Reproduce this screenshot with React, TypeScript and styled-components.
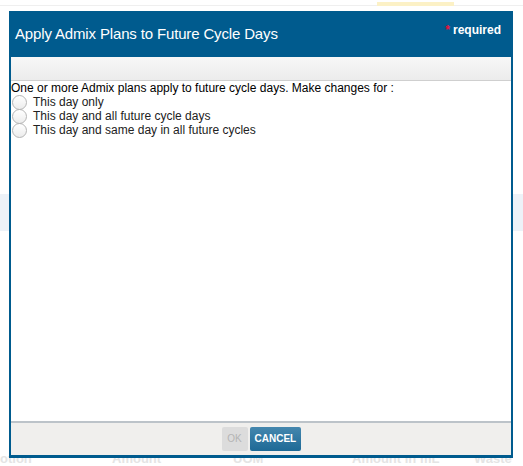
import React from "react";
import styled, { createGlobalStyle } from "styled-components";

const GlobalStyle = createGlobalStyle`
  html, body {
    margin: 0;
    padding: 0;
    background: #ffffff;
    font-family: "Liberation Sans", Arial, sans-serif;
  }
  * { box-sizing: border-box; }
`;

const Page = styled.div`
  position: relative;
  width: 523px;
  height: 466px;
  overflow: hidden;
  background: #fff;
`;

/* faded page behind the modal */
const Backdrop = styled.div`
  display: flex;
  flex-direction: column;
  height: 100%;
`;

const TopStrip = styled.div`
  height: 6px;
  border-bottom: 1px solid #efefef;
  display: flex;
  padding-left: 377px;
`;

const Highlight = styled.div`
  width: 77px;
  height: 4px;
  margin-top: 2px;
  background: #fcf1c6;
`;

const FadedBand = styled.div<{ $top: number; $h: number; $bg: string }>`
  margin-top: ${(p) => p.$top}px;
  height: ${(p) => p.$h}px;
  background: ${(p) => p.$bg};
`;

const FadedHeadRow = styled.div`
  margin-top: auto;
  height: 14px;
  display: grid;
  grid-template-columns: 112px 121px 119px 122px 1fr;
  color: #e4e4e4;
  font-size: 13px;
  font-weight: bold;
  line-height: 14px;
  white-space: nowrap;
  overflow: hidden;
`;

const Modal = styled.div`
  position: absolute;
  left: 9px;
  top: 11px;
  width: 504px;
  height: 447px;
  border: 2px solid #005b8e;
  border-bottom-width: 3px;
  background: #fff;
  display: flex;
  flex-direction: column;
`;

const Header = styled.div`
  height: 44px;
  background: #005b8e;
  color: #fff;
  display: flex;
  justify-content: space-between;
  align-items: flex-start;
  padding: 0 10px 0 4px;
`;

const Title = styled.h1`
  margin: 12px 0 0;
  font-size: 15px;
  font-weight: normal;
  letter-spacing: -0.15px;
  line-height: 18px;
`;

const Required = styled.div`
  margin-top: 10px;
  font-size: 12px;
  font-weight: bold;
  line-height: 14px;
  display: flex;
  align-items: flex-start;
  gap: 3px;
`;

const Star = styled.span`
  color: #e8113a;
  font-size: 12px;
  line-height: 10px;
  margin-top: 2px;
`;

const Toolbar = styled.div`
  height: 24px;
  background: linear-gradient(#f7f7f7, #ececec);
  border-bottom: 1px solid #cfcfcf;
`;

const Body = styled.div`
  flex: 1;
  padding-top: 1px;
  color: #000;
  font-size: 12px;
`;

const Prompt = styled.div`
  line-height: 13px;
`;

const Options = styled.div`
  display: flex;
  flex-direction: column;
`;

const Option = styled.label`
  display: flex;
  align-items: center;
  gap: 6px;
  height: 14px;
  padding-left: 1px;
  color: #222;
  line-height: 14px;
`;

const Radio = styled.span`
  width: 15px;
  height: 15px;
  border-radius: 50%;
  border: 1px solid #b5b5b5;
  background: linear-gradient(#ffffff, #ececec);
  flex: none;
`;

const Footer = styled.div`
  height: 34px;
  background: #f0efed;
  border-top: 2px solid #bcc3c9;
  display: flex;
  justify-content: center;
  align-items: center;
  gap: 2px;
  padding: 0 0 1px 0;
`;

const Button = styled.button<{ $primary?: boolean }>`
  height: 24px;
  padding: 0 5px;
  border: none;
  border-radius: 2px;
  font-family: "Liberation Sans", Arial, sans-serif;
  font-size: 10px;
  font-weight: ${(p) => (p.$primary ? "bold" : "normal")};
  color: ${(p) => (p.$primary ? "#fff" : "#b4b4b4")};
  background: ${(p) =>
    p.$primary ? "linear-gradient(#4587ae, #1d6996)" : "#dcdcdc"};
  width: ${(p) => (p.$primary ? "51px" : "26px")};
`;

const options = [
  "This day only",
  "This day and all future cycle days",
  "This day and same day in all future cycles",
];

export default function App() {
  return (
    <>
      <GlobalStyle />
      <Page>
        <Backdrop>
          <TopStrip>
            <Highlight />
          </TopStrip>
          <FadedBand $top={188} $h={37} $bg="#edf2f8" />
          <FadedHeadRow>
            <span>otion</span>
            <span>Amount</span>
            <span>UOM</span>
            <span>Amount in mL</span>
            <span>Waste</span>
          </FadedHeadRow>
        </Backdrop>
        <Modal>
          <Header>
            <Title>Apply Admix Plans to Future Cycle Days</Title>
            <Required>
              <Star>*</Star>
              required
            </Required>
          </Header>
          <Toolbar />
          <Body>
            <Prompt>
              One or more Admix plans apply to future cycle days. Make changes for :
            </Prompt>
            <Options>
              {options.map((o) => (
                <Option key={o}>
                  <Radio />
                  {o}
                </Option>
              ))}
            </Options>
          </Body>
          <Footer>
            <Button disabled>OK</Button>
            <Button $primary>CANCEL</Button>
          </Footer>
        </Modal>
      </Page>
    </>
  );
}
